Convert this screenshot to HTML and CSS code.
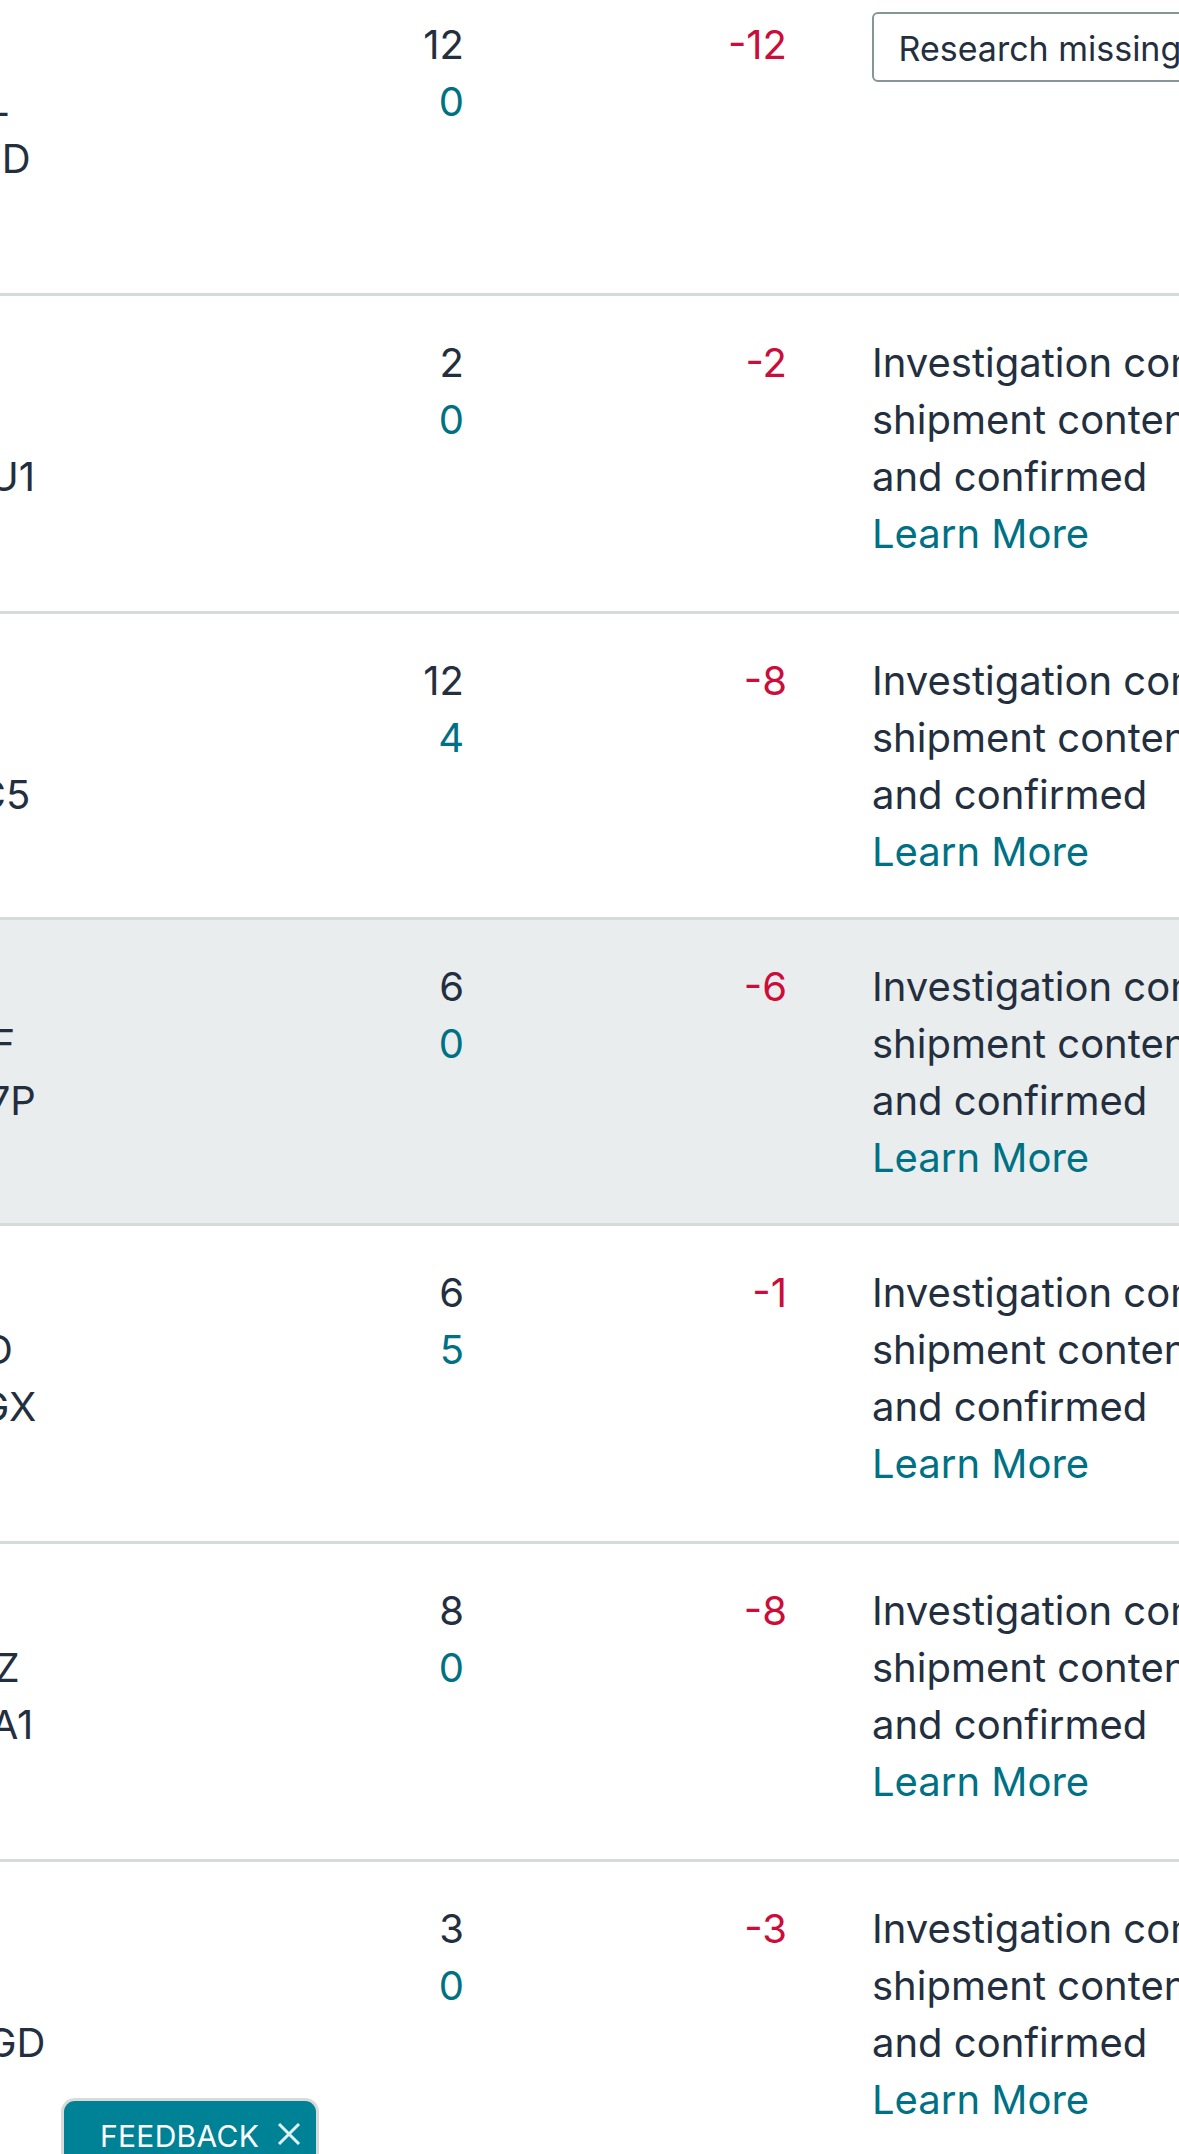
FILE: index.html
```html
<!DOCTYPE html>
<html lang="en">
<head>
<meta charset="utf-8">
<title>Shipment reconciliation</title>
<link rel="stylesheet" href="styles.css">
</head>
<body>
<main class="table">
  <div class="row">
    <div class="cell cell--item"><span class="line">Bin set</span><span class="line">ST-44711-BL</span><span class="line">X002K8N9TD</span></div>
    <div class="cell cell--num"><span class="line">12</span><span class="line teal">0</span></div>
    <div class="cell cell--num"><span class="line red">-12</span></div>
    <div class="cell cell--status"><button class="research-btn" type="button">Research missing units</button></div>
  </div>
  <div class="row">
    <div class="cell cell--item"><span class="line">Mug pack</span><span class="line">MG-208</span><span class="line">X003MQ7NU1</span></div>
    <div class="cell cell--num"><span class="line">2</span><span class="line teal">0</span></div>
    <div class="cell cell--num"><span class="line red">-2</span></div>
    <div class="cell cell--status"><span class="line">Investigation completed, we reviewed the</span><span class="line">shipment contents and inventory records</span><span class="line">and confirmed</span><a class="line link" href="#">Learn More</a></div>
  </div>
  <div class="row row--short">
    <div class="cell cell--item"><span class="line">Towel kit</span><span class="line">TW-319</span><span class="line">X001WR4TC5</span></div>
    <div class="cell cell--num"><span class="line">12</span><span class="line teal">4</span></div>
    <div class="cell cell--num"><span class="line red">-8</span></div>
    <div class="cell cell--status"><span class="line">Investigation completed, we reviewed the</span><span class="line">shipment contents and inventory records</span><span class="line">and confirmed</span><a class="line link" href="#">Learn More</a></div>
  </div>
  <div class="row row--short row--active">
    <div class="cell cell--item"><span class="line">Lamp</span><span class="line">LP-5501-REF</span><span class="line">X004WP2V7P</span></div>
    <div class="cell cell--num"><span class="line">6</span><span class="line teal">0</span></div>
    <div class="cell cell--num"><span class="line red">-6</span></div>
    <div class="cell cell--status"><span class="line">Investigation completed, we reviewed the</span><span class="line">shipment contents and inventory records</span><span class="line">and confirmed</span><a class="line link" href="#">Learn More</a></div>
  </div>
  <div class="row">
    <div class="cell cell--item"><span class="line">Cable</span><span class="line">CB-901121-D</span><span class="line">X002HN8KGX</span></div>
    <div class="cell cell--num"><span class="line">6</span><span class="line teal">5</span></div>
    <div class="cell cell--num"><span class="line red">-1</span></div>
    <div class="cell cell--status"><span class="line">Investigation completed, we reviewed the</span><span class="line">shipment contents and inventory records</span><span class="line">and confirmed</span><a class="line link" href="#">Learn More</a></div>
  </div>
  <div class="row">
    <div class="cell cell--item"><span class="line">Pillow</span><span class="line">PL-7M82-WZ</span><span class="line">X0035NQMA1</span></div>
    <div class="cell cell--num"><span class="line">8</span><span class="line teal">0</span></div>
    <div class="cell cell--num"><span class="line red">-8</span></div>
    <div class="cell cell--status"><span class="line">Investigation completed, we reviewed the</span><span class="line">shipment contents and inventory records</span><span class="line">and confirmed</span><a class="line link" href="#">Learn More</a></div>
  </div>
  <div class="row">
    <div class="cell cell--item"><span class="line">Socks</span><span class="line">SK-11</span><span class="line">X001MZ6WGD</span></div>
    <div class="cell cell--num"><span class="line">3</span><span class="line teal">0</span></div>
    <div class="cell cell--num"><span class="line red">-3</span></div>
    <div class="cell cell--status"><span class="line">Investigation completed, we reviewed the</span><span class="line">shipment contents and inventory records</span><span class="line">and confirmed</span><a class="line link" href="#">Learn More</a></div>
  </div>
</main>
<div class="feedback">
  <span class="feedback__label">FEEDBACK</span>
  <svg class="feedback__close" width="24" height="22" viewBox="0 0 24 22" aria-hidden="true">
    <path d="M2 1 L22 21 M22 1 L2 21" stroke="#dff1f3" stroke-width="3" fill="none" stroke-linecap="butt"/>
  </svg>
</div>
</body>
</html>
```
FILE: styles.css
```css
html, body {
  margin: 0;
  padding: 0;
}
body {
  overflow: hidden;
  background: #ffffff;
  color: #232f3e;
  font-family: Inter, "Noto Sans", "Liberation Sans", sans-serif;
}
.table {
  display: block;
  width: 2300px;
  margin: -25px 0 0 -290px;
  font-size: 40px;
  line-height: 57.2px;
}
.row {
  display: grid;
  grid-template-columns: 390px 406.5px 323px 1180px;
  height: 318px;
  box-sizing: border-box;
  border-top: 3px solid #d5dbdb;
}
.row--short {
  height: 306px;
}
.row--active {
  background: #eaeded;
}
.cell {
  box-sizing: border-box;
  min-width: 0;
  padding: 37.5px 42.5px 0;
}
.cell--item {
  padding-left: 58.5px;
}
.cell--num {
  text-align: right;
}
.line {
  display: block;
  white-space: nowrap;
}
.teal {
  color: #007185;
}
.red {
  color: #cc0c39;
}
.link {
  color: #007185;
  text-decoration: none;
  width: max-content;
}
.research-btn {
  display: flex;
  align-items: center;
  width: max-content;
  height: 70px;
  margin-top: -3.5px;
  padding: 3px 24.5px 0;
  box-sizing: border-box;
  border: 2px solid #879596;
  border-radius: 6px;
  background: #ffffff;
  color: #232f3e;
  font-family: Inter, "Noto Sans", "Liberation Sans", sans-serif;
  font-size: 34px;
  white-space: nowrap;
}
.feedback {
  position: fixed;
  left: 61px;
  bottom: -14px;
  width: 258px;
  height: 70px;
  box-sizing: border-box;
  display: flex;
  align-items: flex-start;
  gap: 18px;
  padding: 17px 18px 0 36px;
  border: 3px solid #dadada;
  border-bottom: none;
  border-radius: 14px 14px 0 0;
  background: #008296;
  color: #ffffff;
  font-size: 30px;
  line-height: 36px;
}
.feedback__label {
  letter-spacing: 0.3px;
}
.feedback__close {
  flex: none;
  margin-top: 5px;
}
```
